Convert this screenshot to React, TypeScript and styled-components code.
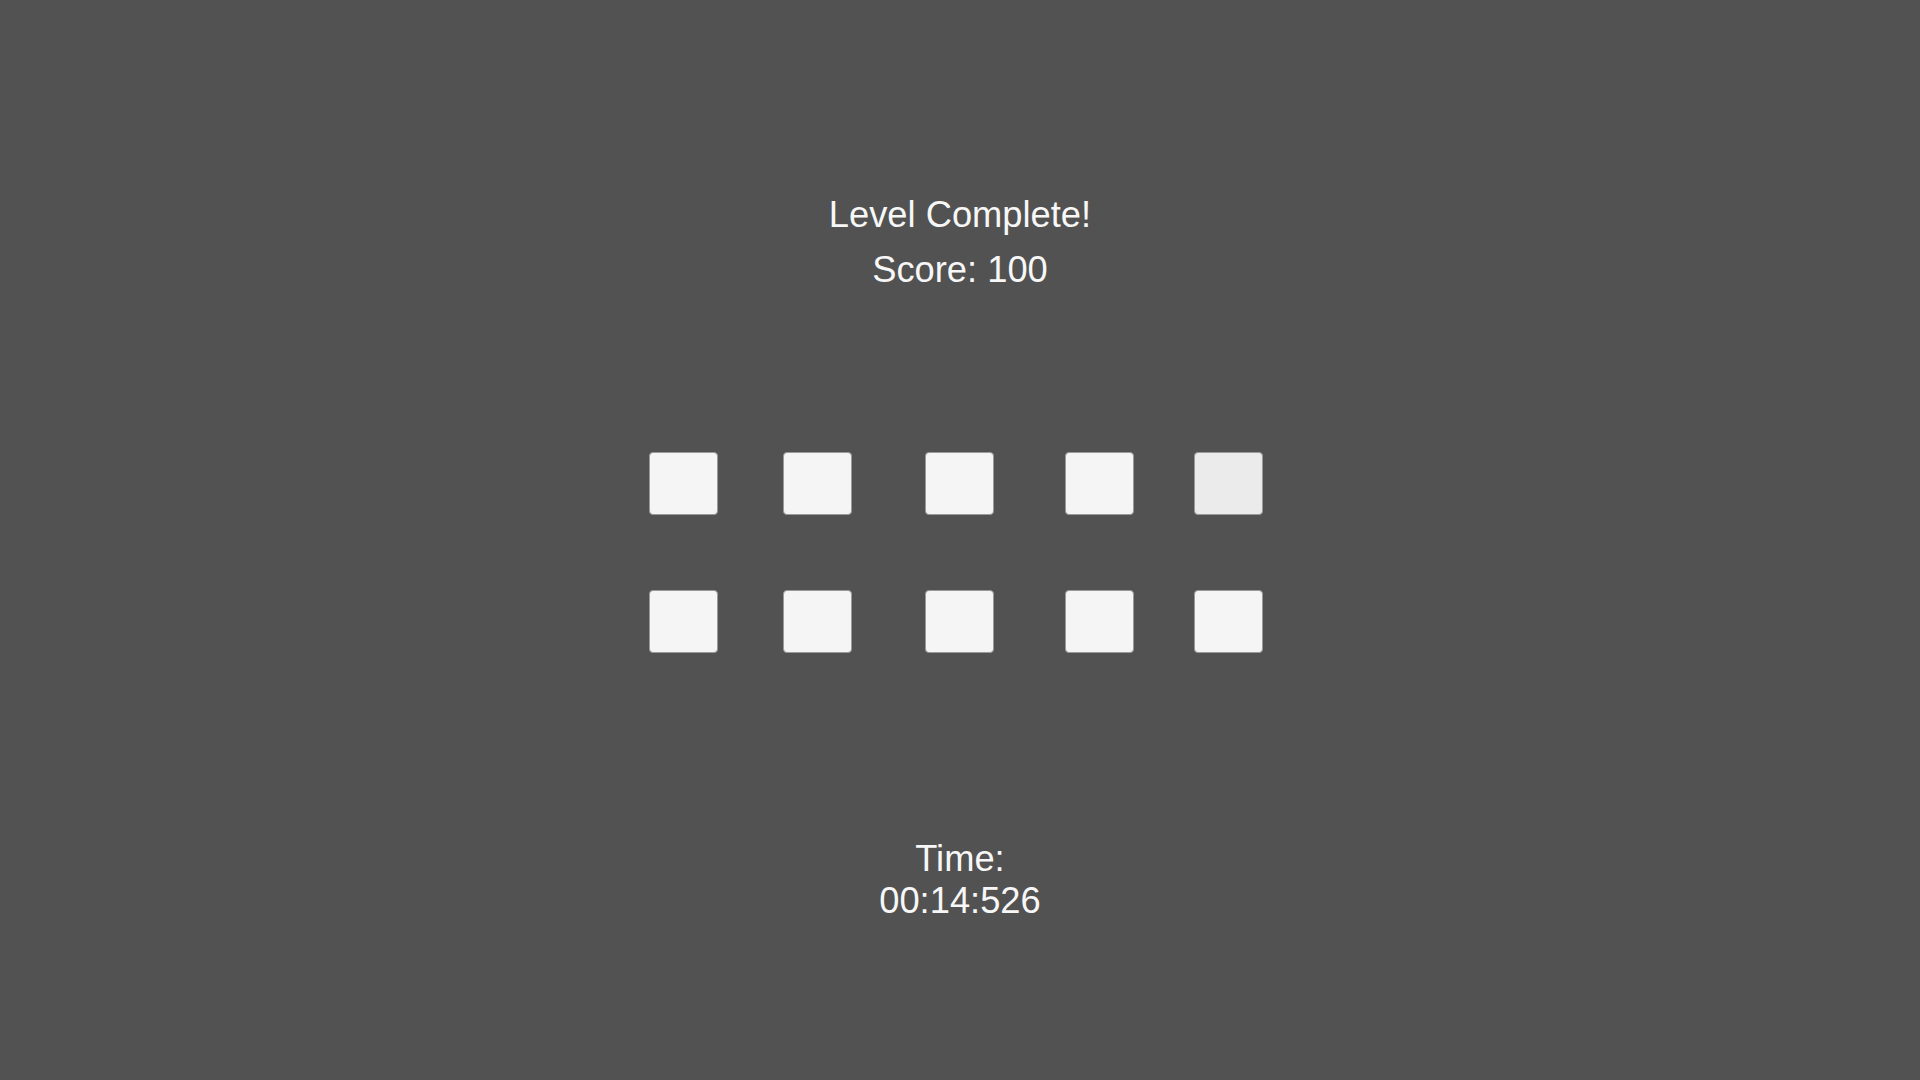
import React from "react";
import styled, { createGlobalStyle } from "styled-components";

const Global = createGlobalStyle`
  html, body {
    margin: 0;
    padding: 0;
    background: #525252;
  }
  body {
    font-family: "Liberation Sans", Arial, sans-serif;
  }
`;

const Page = styled.div`
  width: 1920px;
  height: 1080px;
  background: #525252;
  display: flex;
  flex-direction: column;
  align-items: center;
  padding-top: 194px;
  box-sizing: border-box;
  color: #f7f7f7;
`;

const Heading = styled.div<{ $gap?: number }>`
  font-size: 36.3px;
  line-height: 41.7px;
  text-align: center;
  margin-top: ${(p) => p.$gap ?? 0}px;
`;

const Board = styled.div`
  display: flex;
  flex-direction: column;
  gap: 75px;
  margin-top: 162px;
  align-self: flex-start;
  margin-left: 649px;
`;

const Row = styled.div`
  display: flex;
`;

const Tile = styled.div<{ $offset: number; $dim?: boolean }>`
  width: 69px;
  height: 63px;
  margin-left: ${(p) => p.$offset}px;
  border-radius: 4px;
  box-sizing: border-box;
  border: 1px solid #9a9a9a;
  background: ${(p) => (p.$dim ? "#ebebeb" : "#f5f5f5")};
`;

const Timer = styled.div`
  font-size: 36.3px;
  line-height: 41.6px;
  text-align: center;
  margin-top: 185px;
`;

const offsets = [0, 65, 73, 71, 60];

export default function App() {
  return (
    <>
      <Global />
      <Page>
        <Heading>Level Complete!</Heading>
        <Heading $gap={13}>Score: 100</Heading>
        <Board>
          <Row>
            {offsets.map((o, i) => (
              <Tile key={i} $offset={o} $dim={i === 4} />
            ))}
          </Row>
          <Row>
            {offsets.map((o, i) => (
              <Tile key={i} $offset={o} />
            ))}
          </Row>
        </Board>
        <Timer>
          Time:
          <br />
          00:14:526
        </Timer>
      </Page>
    </>
  );
}
